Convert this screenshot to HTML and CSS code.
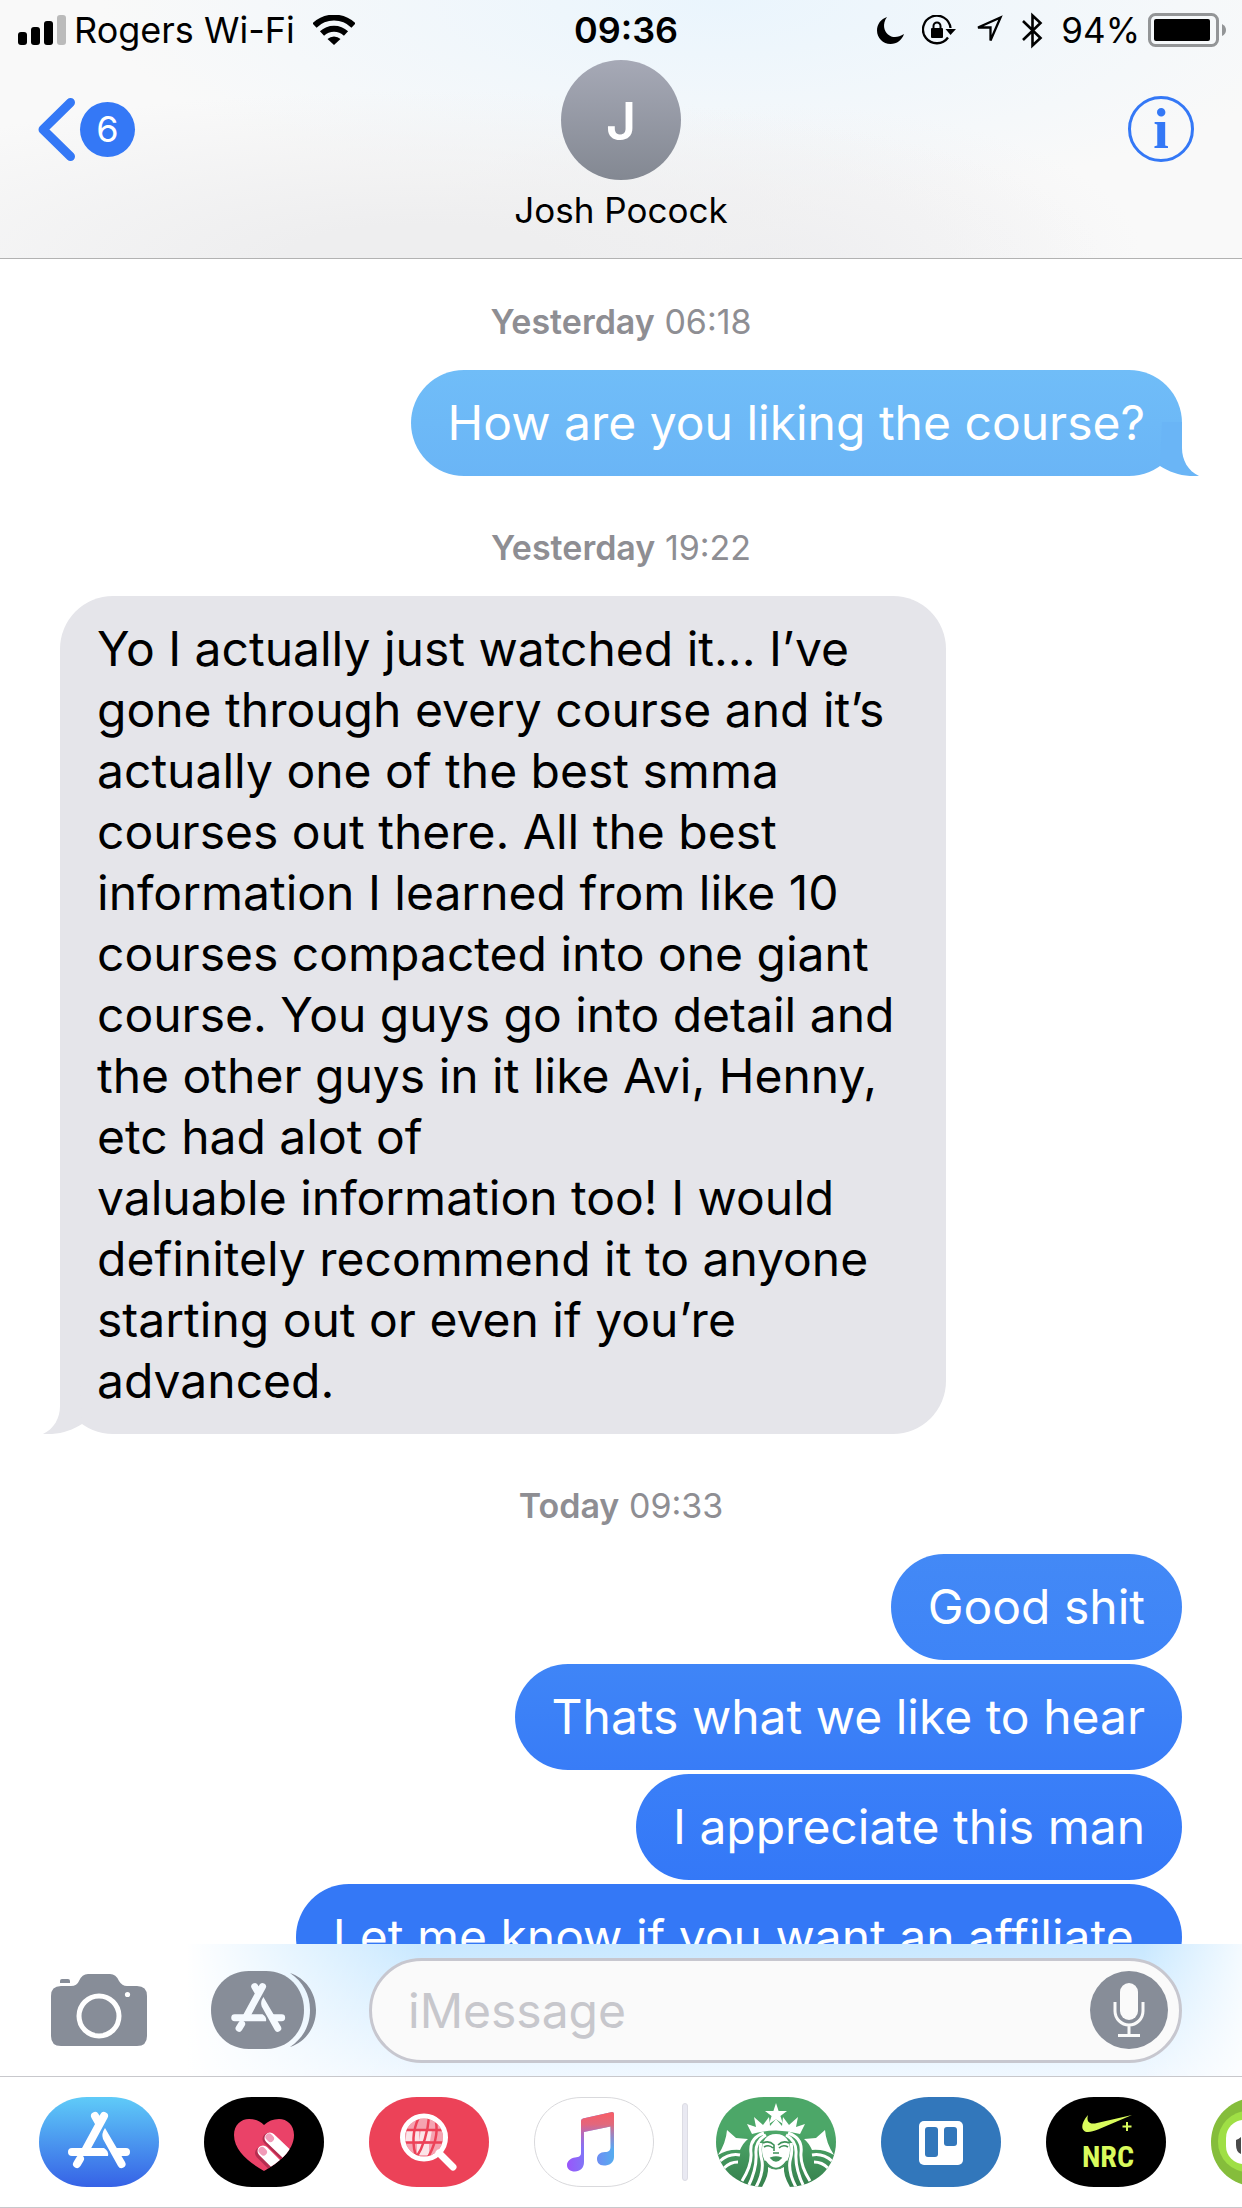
FILE: index.html
```html
<!DOCTYPE html>
<html lang="en">
<head>
  <meta charset="UTF-8">
  <meta name="viewport" content="width=device-width, initial-scale=1">
  <title>Josh Pocock</title>
  <link rel="stylesheet" href="styles.css">
</head>
<body>

<!-- Shared shapes -->
<svg class="defs" width="0" height="0" aria-hidden="true">
  <defs>
    <linearGradient id="storeBlue" x1="0" y1="0" x2="0" y2="1">
      <stop offset="0" stop-color="#5fcbf8"/>
      <stop offset="1" stop-color="#3662e6"/>
    </linearGradient>
    <linearGradient id="musicBase" x1="0" y1="0" x2="1" y2="0">
      <stop offset="0" stop-color="#9a55fb"/>
      <stop offset="1" stop-color="#55adef"/>
    </linearGradient>
    <linearGradient id="musicTop" x1="0" y1="0" x2="0" y2="1">
      <stop offset="0" stop-color="#fb5c64"/>
      <stop offset="0.25" stop-color="#ee6470" stop-opacity="0.9"/>
      <stop offset="0.75" stop-color="#c060c0" stop-opacity="0"/>
    </linearGradient>
    <linearGradient id="coffee" x1="0" y1="0" x2="0" y2="1">
      <stop offset="0.4" stop-color="#4ca768"/>
      <stop offset="1" stop-color="#36804d"/>
    </linearGradient>
    <path id="pill" d="M48 0H72C100 0 120 20 120 45S100 90 72 90H48C20 90 0 70 0 45S20 0 48 0Z"/>
    <clipPath id="pillClip"><use href="#pill"/></clipPath>
    <path id="heart" d="M60 74C46 66 30 54 30 38C30 28 37 22 45 22C51 22 56 24 60 28C64 24 69 22 75 22C83 22 90 28 90 38C90 54 74 66 60 74Z"/>
    <clipPath id="heartClip"><use href="#heart"/></clipPath>
    <g id="storeMark">
      <path d="M65 19L46 54M56 19L60 26M38 67L41 62" fill="none" stroke="currentColor" stroke-width="8" stroke-linecap="round"/>
      <path d="M33 51H65Q70 54 69 59H33A4 4 0 0 1 33 51ZM75 51H87A4 4 0 0 1 87 59H79Z" fill="currentColor"/>
      <path d="M66 31Q62 37 64 42L79 69A4 4 0 0 0 86 65L73 43Z" fill="currentColor"/>
    </g>
    <path id="tail" d="M3 0H23V26C23 38 29 49 40 54C25 55 12 51 1 44Z"/>
  </defs>
</svg>

<header class="header">
  <div class="status-bar">
    <div class="status-left">
      <svg width="48" height="30" viewBox="0 0 48 30">
        <rect y="17" width="9" height="13" rx="3"/>
        <rect x="13" y="12" width="9" height="18" rx="3"/>
        <rect x="26" y="6" width="9" height="24" rx="3"/>
        <rect x="39" width="9" height="30" rx="3" fill="#bbb"/>
      </svg>
      <span>Rogers Wi-Fi</span>
      <svg class="wifi" width="42" height="30" viewBox="0 0 42 30">
        <path d="M1.500 10.500A28 28 0 0 1 40.500 10.500" fill="none" stroke="#000" stroke-width="6"/>
        <path d="M9 18.500A17.500 17.500 0 0 1 33 18.500" fill="none" stroke="#000" stroke-width="6"/>
        <path d="M14.500 24A9.500 9.500 0 0 1 27.500 24L21 30Z"/>
      </svg>
    </div>
    <time class="clock">09:36</time>
    <div class="status-right">
      <svg width="27" height="27" viewBox="0 0 27 27">
        <path d="M10 0C5 7 7 14 11 17.500C15 21 21 21 27 17C25 23 20 27 13.500 27C6 27 0 21 0 13.500C0 7 4 2 10 0Z"/>
      </svg>
      <svg width="34" height="30" viewBox="0 0 34 30">
        <path d="M28.500 13A13.800 13.800 0 1 0 26 22.500" fill="none" stroke="#000" stroke-width="2.300"/>
        <path d="M23.500 14H34L28.500 20Z"/>
        <rect x="9" y="13" width="12" height="10" rx="1"/>
        <path d="M11.500 14V11a3.500 3.500 0 0 1 7 0V14" fill="none" stroke="#000" stroke-width="2"/>
      </svg>
      <svg width="30" height="30" viewBox="0 0 30 30">
        <path d="M4 12.500L26.500 2.500L16.500 25.500V12.500Z" fill="none" stroke="#000" stroke-width="2.300"/>
      </svg>
      <svg width="21" height="37" viewBox="0 0 21 37">
        <path d="M1 9L18.500 26L10.500 33.500V3.500L18.500 11L1 28" fill="none" stroke="#000" stroke-width="2.600"/>
      </svg>
      <span class="charge">94%</span>
      <svg class="battery" width="86" height="34" viewBox="0 0 86 34">
        <rect x="1.500" y="1.500" width="68" height="31" rx="6" fill="none" stroke="#939597" stroke-width="3"/>
        <rect x="6" y="6" width="56" height="22" rx="2"/>
        <path d="M74 11Q78 13 78 17T74 23Z" fill="#939597"/>
      </svg>
    </div>
  </div>

  <nav class="nav">
    <button class="back" aria-label="Back, 6 unread">
      <svg width="37" height="63" viewBox="0 0 37 63">
        <path d="M32.500 4.500L5 31.500L32.500 58.500" fill="none" stroke="#3478f6" stroke-width="9" stroke-linecap="round" stroke-linejoin="round"/>
      </svg>
      <span class="unread">6</span>
    </button>
    <div class="contact">
      <div class="avatar">J</div>
      <h1>Josh Pocock</h1>
    </div>
    <button class="info" aria-label="Details">i</button>
  </nav>
</header>

<main class="thread">
  <p class="stamp"><b>Yesterday</b> 06:18</p>
  <div class="bubble sent light">
    How are you liking the course?
    <svg class="tail" width="40" height="54" viewBox="0 0 40 54"><use href="#tail"/></svg>
  </div>

  <p class="stamp"><b>Yesterday</b> 19:22</p>
  <div class="bubble received">
    Yo I actually just watched it... I’ve<br>
    gone through every course and it’s<br>
    actually one of the best smma<br>
    courses out there. All the best<br>
    information I learned from like 10<br>
    courses compacted into one giant<br>
    course. You guys go into detail and<br>
    the other guys in it like Avi, Henny,<br>
    etc had alot of<br>
    valuable information too! I would<br>
    definitely recommend it to anyone<br>
    starting out or even if you’re<br>
    advanced.
    <svg class="tail" width="40" height="54" viewBox="0 0 40 54"><use href="#tail"/></svg>
  </div>

  <p class="stamp"><b>Today</b> 09:33</p>
  <div class="bubble sent blue-1">Good shit</div>
  <div class="bubble sent blue-2">Thats what we like to hear</div>
  <div class="bubble sent blue-3">I appreciate this man</div>
  <div class="bubble sent blue-4">Let me know if you want an affiliate</div>
</main>

<form class="composer">
  <button type="button" class="camera" aria-label="Camera">
    <svg width="96" height="72" viewBox="0 0 96 72">
      <path d="M10 12H20Q26 12 28 7Q31 0 37 0H59Q65 0 68 7Q71 12 76 12H86Q96 12 96 22V62Q96 72 86 72H10Q0 72 0 62V22Q0 12 10 12Z" fill="#878d98"/>
      <path d="M9 9V7Q9 5 11 5H17Q19 5 19 7V9Z" fill="#878d98"/>
      <circle cx="48" cy="42" r="20" fill="none" stroke="#fff" stroke-width="5"/>
      <circle cx="76.500" cy="20.500" r="2.600" fill="#fff"/>
    </svg>
  </button>
  <button type="button" class="apps" aria-label="Apps">
    <svg width="105" height="78" viewBox="0 0 105 78">
      <path d="M38 0H55C77 0 93 17 93 39S77 78 55 78H38C16 78 0 61 0 39S16 0 38 0Z" fill="#878d98"/>
      <path d="M79 2C94 7 105 21 105 39S94 71 79 76C92 67 99 55 99 39S92 11 79 2Z" fill="#878d98"/>
      <use href="#storeMark" transform="translate(-5 -1) scale(.87)" color="#f5faff"/>
    </svg>
  </button>
  <div class="field">
    <input type="text" placeholder="iMessage" aria-label="iMessage">
    <button type="button" class="mic" aria-label="Dictate">
      <svg width="78" height="78" viewBox="0 0 78 78">
        <circle cx="39" cy="39" r="39" fill="#878d98"/>
        <rect x="30" y="12" width="18" height="37" rx="9" fill="#fafafa"/>
        <path d="M25 31V40A14 14 0 0 0 53 40V31M39 54V65" fill="none" stroke="#fafafa" stroke-width="3"/>
        <rect x="28" y="63" width="22" height="3" fill="#fafafa"/>
      </svg>
    </button>
  </div>
</form>

<footer class="app-strip">
  <button aria-label="App Store">
    <svg width="120" height="90" viewBox="0 0 120 90">
      <use href="#pill" fill="url(#storeBlue)"/>
      <use href="#storeMark" color="#fff"/>
    </svg>
  </button>
  <button aria-label="Digital Touch">
    <svg width="120" height="90" viewBox="0 0 120 90">
      <use href="#pill"/>
      <use href="#heart" fill="#ea4268"/>
      <g clip-path="url(#heartClip)" stroke-linecap="round">
        <path d="M64.500 42L86 63M57 56L76 75" stroke="#b52d50" stroke-width="12"/>
        <path d="M66 41L88 62M59 54L78 73" stroke="#fff" stroke-width="11"/>
        <path d="M65 40L66.500 41.500M58 53.500L59.500 55" stroke="#f19bb8" stroke-width="7"/>
      </g>
    </svg>
  </button>
  <button aria-label="Images">
    <svg width="120" height="90" viewBox="0 0 120 90">
      <use href="#pill" fill="#ec4258"/>
      <circle cx="55" cy="40.500" r="19" fill="#f5a3b1"/>
      <path d="M38 33H50V46H36ZM52 33H63L61 44H50ZM48 47H60V58H48Z" fill="#fce4e8"/>
      <path d="M34 33H76M34 45.500H76M50 20Q40 41 48 62M60 20Q58 44 47 61M67 25Q70 42 58 62" fill="none" stroke="#ec4258" stroke-width="2.500"/>
      <circle cx="55" cy="40.500" r="21.500" fill="none" stroke="#fff" stroke-width="5"/>
      <path d="M70 56L84 70" stroke="#fff" stroke-width="7" stroke-linecap="round"/>
    </svg>
  </button>
  <button aria-label="Music">
    <svg width="120" height="90" viewBox="0 0 120 90">
      <path d="M48 .5H72C100 .5 119.500 20 119.500 45S100 89.500 72 89.500H48C20 89.500 .5 70 .5 45S20 .5 48 .5Z" fill="#fff" stroke="#d9d9dc"/>
      <path d="M47 24Q47 22 49 21.500L78 15Q80 15 80 17V60C80 66 75 68.500 70 68.500S63 65 63 62C63 58 66 55 71 55C75 55 76.500 53 76.500 50V29.500L50 35V65C50 71 46 74.500 41 74.500S33 72 33 68S37 61 41 60.500C45 60 47 59 47 56Z" fill="url(#musicBase)"/>
      <path d="M47 24Q47 22 49 21.500L78 15Q80 15 80 17V60H76.500V29.500L50 35V65H47Z" fill="url(#musicTop)"/>
    </svg>
  </button>
  <span class="divider"></span>
  <button aria-label="Starbucks">
    <svg width="120" height="90" viewBox="0 0 120 90">
      <use href="#pill" fill="url(#coffee)"/>
      <g clip-path="url(#pillClip)" fill="#fff">
        <path d="M60 6L62.600 14H71L64.400 19L67 27L60 22.200L53 27L55.600 19L49 14H57.400Z"/>
        <path d="M36 37L31 27L40 30L38 20L47 28L53 20L54 29L60 22L66 29L67 20L73 28L82 20L80 30L89 27L84 37Q60 30 36 37Z"/>
        <path d="M11 33L20 41L32 42Q27 46 24 53Q12 52 2 58Q10 46 11 33ZM109 33L100 41L88 42Q93 46 96 53Q108 52 118 58Q110 46 109 33Z"/>
        <g fill="none" stroke="#fff" stroke-width="3">
          <path d="M4 64Q13 56 24 58M8 71Q14 65 22 65M116 64Q107 56 96 58M112 71Q106 65 98 65"/>
          <path d="M48 36Q33 41 35 56Q36 68 26 84M50 38Q39 44 40 57Q41 72 32 90M45 46Q43 54 46 64Q48 76 39 92"/>
          <path d="M72 36Q87 41 85 56Q84 68 94 84M70 38Q81 44 80 57Q79 72 88 90M75 46Q77 54 74 64Q72 76 81 92"/>
        </g>
        <path d="M60 37C70 37 74 44 74 53C74 62 68 72 60 72S46 62 46 53C46 44 50 37 60 37Z"/>
        <path d="M52 70Q60 75 68 70Q67 78 74 90H46Q53 78 52 70Z"/>
      </g>
      <g fill="none" stroke="#3f9159" stroke-width="1.600">
        <path d="M47 46Q53 43 58 48V54M73 46Q67 43 62 48M48 50Q53 47 57 51M72 50Q67 47 63 51M57 56H63"/>
        <path d="M55 61Q60 59 65 61Q60 67 55 61Z" fill="#3f9159"/>
        <path d="M49 64Q60 79 71 64"/>
      </g>
    </svg>
  </button>
  <button aria-label="Trello">
    <svg width="120" height="90" viewBox="0 0 120 90">
      <use href="#pill" fill="#3277bb"/>
      <rect x="38" y="24" width="44" height="44" rx="5" fill="#fff"/>
      <rect x="44" y="30" width="13" height="30" rx="3" fill="#3277bb"/>
      <rect x="63" y="30" width="13" height="19" rx="3" fill="#3277bb"/>
    </svg>
  </button>
  <button aria-label="Nike Run Club">
    <svg width="120" height="90" viewBox="0 0 120 90">
      <use href="#pill"/>
      <path d="M42 18C34 27 35 35 42 35C45 35 48 34 52 32.500L86 18L51 26C44 28 40 25 42 18Z" fill="#d9fb5c"/>
      <path d="M81 25V34M76.500 29.500H85.500" stroke="#d9fb5c" stroke-width="2"/>
      <text class="nrc" x="62" y="70" text-anchor="middle">NRC</text>
    </svg>
  </button>
  <button aria-label="More apps">
    <svg width="120" height="90" viewBox="0 0 120 90">
      <use href="#pill" fill="#85bd3b"/>
      <rect x="7" y="14" width="106" height="61" rx="30" fill="#9fdf45"/>
      <rect x="15" y="23" width="44" height="44" rx="18" fill="#fff"/>
      <path d="M25 43Q28 42 30 40V57Q25 55 25 48Z" fill="#4a4a4a"/>
    </svg>
  </button>
</footer>

</body>
</html>
```
FILE: styles.css
```css
:root {
  --blue: #3478f6;
  --gray: #8e8e93;
  --line: #c8c8cc;
  --bubble: #e5e5ea;
}

* {
  box-sizing: border-box;
}

body {
  margin: 0;
  height: 100vh;
  display: flex;
  flex-direction: column;
  overflow: hidden;
  background: #fff;
  color: #000;
  font-family: Inter, "Liberation Sans", sans-serif;
  font-size: 36px;
}

.defs {
  position: absolute;
}

svg {
  display: block;
  flex: none;
}

button {
  flex: none;
  padding: 0;
  border: none;
  background: none;
  font: inherit;
  cursor: pointer;
}

/* Header */
.header {
  flex: none;
  border-bottom: 1px solid #b2b2b2;
  background:
    radial-gradient(ellipse 55% 65% at 34% 100%, #eeeeef 20%, rgba(238, 238, 239, 0)),
    radial-gradient(ellipse 30% 60% at 62% 100%, #f0f0f2, rgba(240, 240, 242, 0)),
    radial-gradient(ellipse 50% 80% at 58% 0, #eaf5fd, rgba(234, 245, 253, 0)),
    #f9f9f9;
}

.status-bar {
  display: grid;
  grid-template-columns: 1fr auto 1fr;
  align-items: center;
  height: 60px;
  padding: 0 8px 0 18px;
  line-height: 44px;
}

.status-left,
.status-right {
  display: flex;
  align-items: center;
}

.status-left {
  gap: 8px;
}

.wifi {
  margin-left: 10px;
}

.clock {
  font-weight: 600;
}

.status-right {
  justify-content: flex-end;
  gap: 18px;
}

.charge {
  font-size: 35px;
}

.battery {
  margin-left: -10px;
}

.nav {
  display: grid;
  grid-template-columns: 1fr auto 1fr;
  align-items: start;
  height: 198px;
  padding: 0 38px;
}

.back {
  display: flex;
  align-items: center;
  justify-self: start;
  gap: 5px;
  margin-top: 38px;
}

.unread {
  width: 55px;
  height: 55px;
  border-radius: 50%;
  background: var(--blue);
  color: #fff;
  line-height: 55px;
  text-align: center;
}

.contact {
  display: flex;
  flex-direction: column;
  align-items: center;
  gap: 8px;
}

.avatar {
  width: 120px;
  height: 120px;
  border-radius: 50%;
  background: linear-gradient(#a6a9b6, #838892);
  color: #fff;
  font-size: 52px;
  font-weight: 600;
  line-height: 124px;
  text-align: center;
}

.contact h1 {
  margin: 0;
  font-size: 35px;
  font-weight: 400;
  line-height: 44px;
}

.info {
  justify-self: end;
  width: 66px;
  height: 66px;
  margin: 36px 10px 0 0;
  border: 3px solid var(--blue);
  border-radius: 50%;
  color: var(--blue);
  font-family: "Liberation Serif", serif;
  font-size: 56px;
  font-weight: bold;
  line-height: 56px;
}

/* Messages */
.thread {
  flex: 1;
  min-height: 0;
  overflow: hidden;
  display: flex;
  flex-direction: column;
  gap: 4px;
  padding: 0 60px;
}

.stamp {
  margin: 48px 0 24px;
  color: var(--gray);
  font-size: 34px;
  line-height: 40px;
  text-align: center;
}

.stamp:first-child {
  margin-top: 43px;
}

.stamp b {
  font-weight: 600;
}

.bubble {
  position: relative;
  flex: none;
  padding: 22px 37px 23px;
  border-radius: 53px;
  font-size: 48px;
  line-height: 61px;
}

.sent {
  align-self: flex-end;
  color: #fff;
}

.received {
  align-self: flex-start;
  width: 79%;
  background: var(--bubble);
  fill: var(--bubble);
}

.light {
  background: linear-gradient(#70bdf8, #6ab5f6);
  fill: #6ab5f6;
}

.blue-1 {
  background: linear-gradient(#4389f6, #3e84f7);
}

.blue-2 {
  background: linear-gradient(#3f85f7, #387cf7);
}

.blue-3 {
  background: linear-gradient(#3a7ff8, #3478f7);
}

.blue-4 {
  width: 79%;
  background: var(--blue);
  white-space: nowrap;
}

.tail {
  position: absolute;
  bottom: 0;
}

.sent .tail {
  right: -17px;
}

.received .tail {
  left: -17px;
  transform: scaleX(-1);
}

/* Composer */
.composer {
  flex: none;
  display: flex;
  align-items: center;
  height: 132px;
  padding: 0 60px 0 51px;
  background:
    linear-gradient(90deg, #fff 15%, rgba(255, 255, 255, 0) 34%, rgba(255, 255, 255, 0) 92%, rgba(255, 255, 255, 0.8)),
    linear-gradient(#c8e8ff, #f0f8ff);
}

.apps {
  margin: 0 53px 0 64px;
}

.field {
  flex: 1;
  min-width: 0;
  display: flex;
  align-items: center;
  height: 105px;
  padding: 0 11px 0 36px;
  border: 3px solid #c7c7cf;
  border-radius: 53px;
  background: #fafafa;
}

.field input {
  flex: 1;
  min-width: 0;
  padding: 0;
  border: none;
  outline: none;
  background: none;
  font: inherit;
  font-size: 48px;
}

.field input::placeholder {
  color: #c7c7cc;
  opacity: 1;
}

/* App strip */
.app-strip {
  flex: none;
  display: flex;
  align-items: center;
  gap: 45px;
  height: 132px;
  padding-left: 39px;
  border-top: 1px solid var(--line);
  border-bottom: 1px solid var(--line);
  overflow: hidden;
}

.divider {
  flex: none;
  width: 6px;
  height: 78px;
  margin: 0 -17px;
  border: 1px solid #dcdce4;
  border-radius: 3px;
  background: #e9e9f2;
}

.nrc {
  fill: #d9fb5c;
  font-family: "Liberation Sans Narrow", "Roboto Condensed", Roboto, sans-serif;
  font-size: 30px;
  font-weight: bold;
}
```
